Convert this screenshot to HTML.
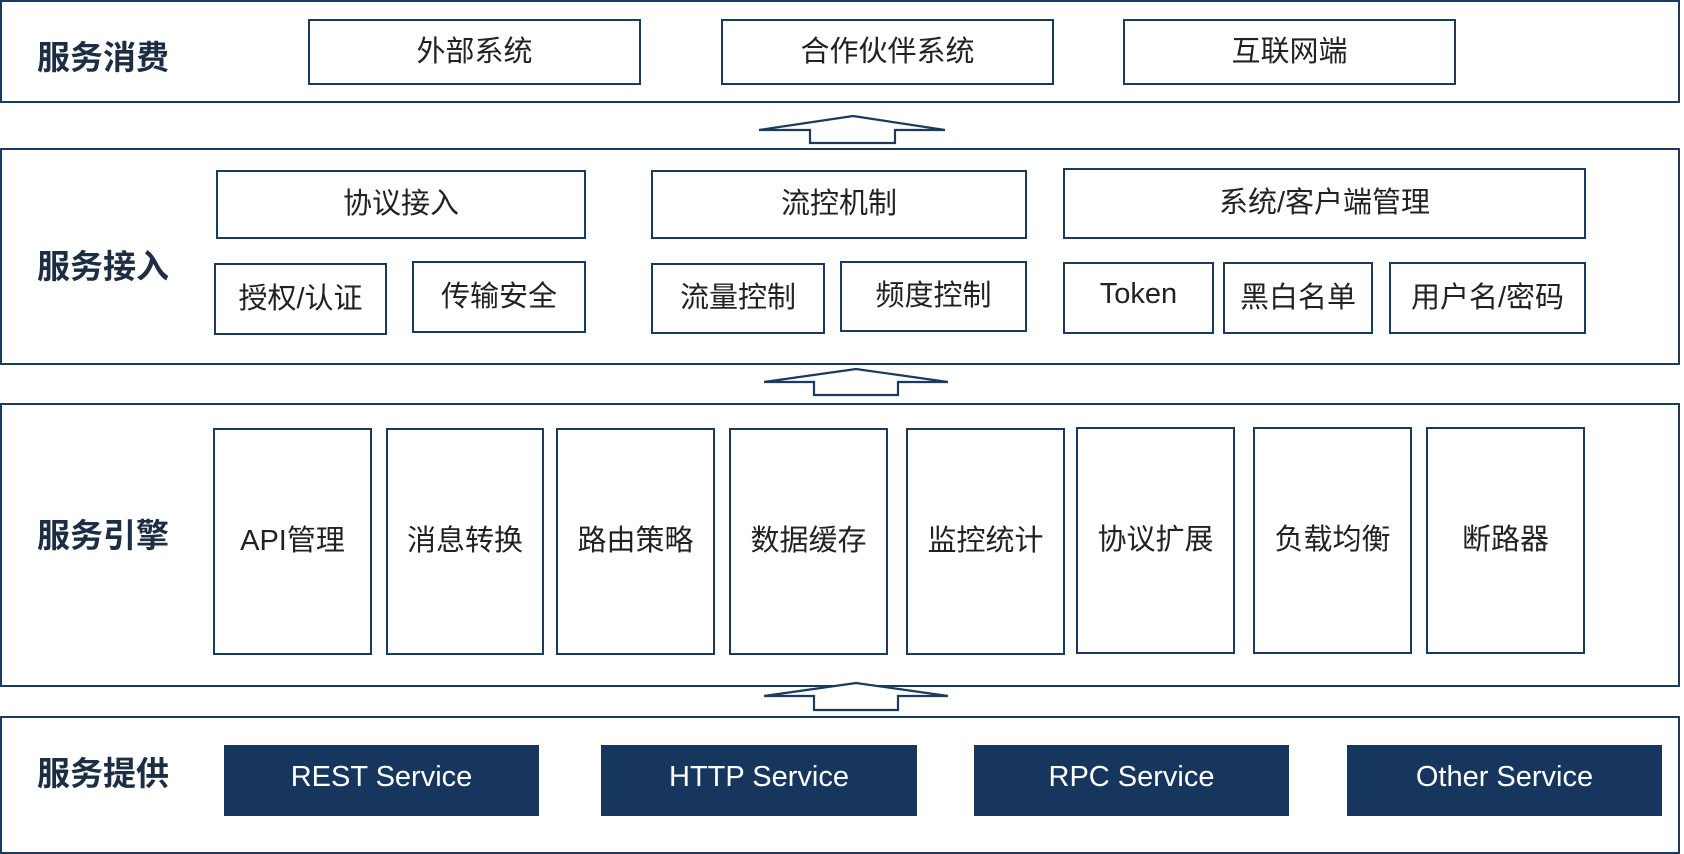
<!DOCTYPE html>
<html><head><meta charset="utf-8"><style>
body{margin:0;width:1684px;height:854px;background:#fff;position:relative;overflow:hidden;font-family:"Liberation Sans","Noto Sans CJK SC",sans-serif;color:#1b1b1b}
.s{position:absolute;left:0;width:1680px;border:2px solid #1a3a5e;box-sizing:border-box}
.b{position:absolute;border:2px solid #1a3a5e;box-sizing:border-box;display:flex;align-items:center;justify-content:center;font-size:29px;color:#222;padding-bottom:7px}
.l{position:absolute;left:37px;font-size:33px;font-weight:bold;color:#1d2d44}
.f{background:#17365d;color:#fff;border:none;font-size:29px;padding-bottom:6px}
</style></head><body>
<div class="s" style="top:0;height:103px"></div>
<div class="s" style="top:148px;height:217px"></div>
<div class="s" style="top:403px;height:284px"></div>
<div class="s" style="top:716px;height:138px"></div>
<div class="l" style="top:31px">服务消费</div>
<div class="l" style="top:240px">服务接入</div>
<div class="l" style="top:509px">服务引擎</div>
<div class="l" style="top:747px">服务提供</div>
<div class="b" style="left:308px;top:19px;width:333px;height:66px">外部系统</div>
<div class="b" style="left:721px;top:19px;width:333px;height:66px">合作伙伴系统</div>
<div class="b" style="left:1123px;top:19px;width:333px;height:66px">互联网端</div>
<div class="b" style="left:216px;top:170px;width:370px;height:69px">协议接入</div>
<div class="b" style="left:651px;top:170px;width:376px;height:69px">流控机制</div>
<div class="b" style="left:1063px;top:168px;width:523px;height:71px">系统/客户端管理</div>
<div class="b" style="left:214px;top:263px;width:173px;height:72px">授权/认证</div>
<div class="b" style="left:412px;top:261px;width:174px;height:72px">传输安全</div>
<div class="b" style="left:651px;top:263px;width:174px;height:71px">流量控制</div>
<div class="b" style="left:840px;top:261px;width:187px;height:71px">频度控制</div>
<div class="b" style="left:1063px;top:262px;width:151px;height:72px">Token</div>
<div class="b" style="left:1223px;top:262px;width:150px;height:72px">黑白名单</div>
<div class="b" style="left:1389px;top:262px;width:197px;height:72px">用户名/密码</div>
<div class="b" style="left:213px;top:428px;width:159px;height:227px">API管理</div>
<div class="b" style="left:386px;top:428px;width:158px;height:227px">消息转换</div>
<div class="b" style="left:556px;top:428px;width:159px;height:227px">路由策略</div>
<div class="b" style="left:729px;top:428px;width:159px;height:227px">数据缓存</div>
<div class="b" style="left:906px;top:428px;width:159px;height:227px">监控统计</div>
<div class="b" style="left:1076px;top:427px;width:159px;height:227px">协议扩展</div>
<div class="b" style="left:1253px;top:427px;width:159px;height:227px">负载均衡</div>
<div class="b" style="left:1426px;top:427px;width:159px;height:227px">断路器</div>
<div class="b f" style="left:224px;top:745px;width:315px;height:71px">REST Service</div>
<div class="b f" style="left:601px;top:745px;width:316px;height:71px">HTTP Service</div>
<div class="b f" style="left:974px;top:745px;width:315px;height:71px">RPC Service</div>
<div class="b f" style="left:1347px;top:745px;width:315px;height:71px">Other Service</div>
<svg width="1684" height="854" style="position:absolute;left:0;top:0" fill="#fff" stroke="#1a3a5e" stroke-width="2.2">
<polygon points="853,116 945,130 895,130 895,143 810,143 810,130 759,130"/>
<polygon points="856,369 948,382 898,382 898,395 814,395 814,382 764,382"/>
<polygon points="856,683 948,696 898,696 898,710 814,710 814,696 764,696"/>
</svg>
</body></html>
